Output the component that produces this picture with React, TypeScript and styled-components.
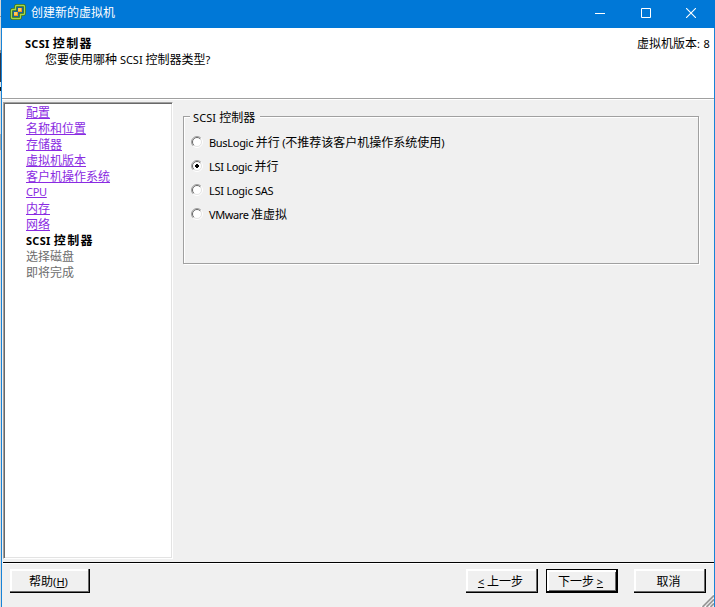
import React from "react";
import styled, { createGlobalStyle, css } from "styled-components";

const GlobalStyle = createGlobalStyle`
  * { box-sizing: border-box; }
  html, body { margin: 0; padding: 0; overflow: hidden; }
  body {
    font-family: "Noto Sans CJK SC", sans-serif;
    font-size: 12px;
    line-height: 16px;
    color: #000;
  }
`;

const Screen = styled.div`
  width: 715px;
  height: 607px;
  display: flex;
  overflow: hidden;
`;

const Backdrop = styled.div`
  width: 1px;
  flex: none;
  background: linear-gradient(
    #d6d6d6 0 16px, #8f9296 16px 17px, #d9d9d9 17px 50px, #8b8b8b 50px 53px,
    #303848 53px 82px, #e4e4e4 82px 87px, #111 87px 91px, #dcdcdc 91px 134px,
    #aaa 134px 150px, #dcdcdc 150px
  );
`;

const Window = styled.div`
  flex: 1;
  min-width: 0;
  display: flex;
  flex-direction: column;
  background: #f0f0f0;
  border: solid #1883d7;
  border-width: 0 1px;
`;

const TitleBar = styled.header`
  height: 28px;
  flex: none;
  display: flex;
  align-items: flex-start;
  margin: 0 -1px;
  padding: 0 1px 0 9px;
  background: #0078d7;
  color: #fff;
`;

const AppIcon = styled.svg`
  width: 16px;
  height: 16px;
  margin-top: 4px;
`;

const Title = styled.span`
  flex: 1;
  margin: 4px 0 0 5px;
`;

const WindowButton = styled.button`
  width: 45.5px;
  height: 25px;
  padding: 0;
  border: 0;
  background: none;
  display: grid;
  place-items: center;
`;

const Heading = styled.section`
  height: 71px;
  flex: none;
  display: flex;
  justify-content: space-between;
  padding: 7px 4px 0 23px;
  background: #fff;
  border-bottom: 1px solid #a0a0a0;
`;

const HeadingTitle = styled.div`
  height: 16px;
  line-height: 15px;
`;

const BoldText = styled.span`
  font-weight: 700;
  letter-spacing: 1.3px;
`;

const Question = styled.div`
  height: 16px;
  line-height: 15px;
  padding-left: 20px;
`;

const Version = styled.span`
  line-height: 15px;
`;

const Latin = styled.span<{ $spacing?: number; $underline?: boolean }>`
  font-family: "Noto Sans", sans-serif;
  font-size: 11px;
  letter-spacing: ${(p) => p.$spacing ?? 0}px;
  ${(p) => p.$underline && css`text-decoration: underline;`}
`;

const Body = styled.main`
  height: 463px;
  flex: none;
  display: flex;
  border-top: 1px solid #fff;
  border-bottom: 1px solid #f0f0f0;
`;

const Steps = styled.nav`
  width: 170px;
  height: 457px;
  flex: none;
  display: flex;
  flex-direction: column;
  margin: 2px 0 0 1px;
  padding: 0 0 0 22px;
  background: #fff;
  border: 1px solid;
  border-color: #a0a0a0 #fff #fff #a0a0a0;
  box-shadow: inset 1px 1px #696969, inset -1px -1px #e3e3e3;
`;

const Step = styled.span<{ $state: "done" | "current" | "pending"; $raised?: boolean }>`
  height: 16px;
  line-height: ${(p) => (p.$raised ? 15 : 17)}px;
  ${(p) => p.$state === "done" && css`
    color: #8a2be2;
    text-decoration: underline;
    text-decoration-thickness: 1px;
    text-underline-offset: 1px;
  `}
  ${(p) => p.$state === "pending" && css`color: #6d6d6d;`}
`;

const Group = styled.fieldset`
  width: 516px;
  height: 156px;
  margin: 8px 0 0 10px;
  padding: 6px 7px 0;
  min-width: 0;
  border: 1px solid #a0a0a0;
  box-shadow: 1px 1px #fff, inset 1px 1px #fff;
`;

const Legend = styled.legend`
  height: 16px;
  line-height: 18px;
  margin-left: -1px;
  padding: 0 5px 0 3px;
  background: #f0f0f0;
`;

const Option = styled.label`
  height: 24px;
  display: flex;
  align-items: center;
  gap: 6px;
`;

const RadioMark = styled.svg`
  width: 12px;
  height: 12px;
  flex: none;
  margin-top: -1px;
`;

const Footer = styled.footer`
  flex: 1;
  display: flex;
  align-items: flex-start;
  margin-left: 1px;
  padding: 5px 8px 0 7px;
  border-top: 1px solid #000;
  box-shadow: inset 0 1px #fff;
  position: relative;
`;

const PushButton = styled.button<{ $width: number; $gap?: number; $default?: boolean; $push?: boolean }>`
  width: ${(p) => p.$width}px;
  height: 24px;
  margin-top: 1px;
  margin-left: ${(p) => (p.$push ? "auto" : `${p.$gap ?? 0}px`)};
  padding: 0 3px 0 0;
  border: 0;
  background: #f0f0f0;
  color: #000;
  font: inherit;
  line-height: 16px;
  white-space: pre;
  box-shadow: ${(p) =>
    p.$default
      ? "inset 0 0 0 1px #000, inset -2px -2px #000, inset 3px 3px #fff, inset -3px -3px #696969"
      : "inset -1px -1px #000, inset -2px -2px #696969, inset 2px 2px #fff"};
`;

const Grip = styled.svg`
  position: absolute;
  right: 0;
  bottom: 0;
  width: 13px;
  height: 13px;
`;

type StepItem = { text: string; state: "done" | "current" | "pending"; latin?: string };

const steps: StepItem[] = [
  { text: "配置", state: "done" },
  { text: "名称和位置", state: "done" },
  { text: "存储器", state: "done" },
  { text: "虚拟机版本", state: "done" },
  { text: "客户机操作系统", state: "done" },
  { text: "", latin: "CPU", state: "done" },
  { text: "内存", state: "done" },
  { text: "网络", state: "done" },
  { text: "控制器", latin: "SCSI ", state: "current" },
  { text: "选择磁盘", state: "pending" },
  { text: "即将完成", state: "pending" },
];

const Radio = ({ checked }: { checked?: boolean }) => (
  <RadioMark viewBox="0 0 12 12">
    <circle cx="6" cy="6" r="5" fill="#fff" />
    <path d="M9.9 2.1A5.5 5.5 0 0 1 2.1 9.9" fill="none" stroke="#fff" />
    <path d="M9.2 2.8A4.5 4.5 0 0 1 2.8 9.2" fill="none" stroke="#e3e3e3" />
    <path d="M2.1 9.9A5.5 5.5 0 0 1 9.9 2.1" fill="none" stroke="#a0a0a0" />
    <path d="M2.8 9.2A4.5 4.5 0 0 1 9.2 2.8" fill="none" stroke="#696969" />
    {checked && <path d="M5 4h2v1h1v2H7v1H5V7H4V5h1z" fill="#000" />}
  </RadioMark>
);

export default function App() {
  return (
    <>
      <GlobalStyle />
      <Screen>
        <Backdrop />
        <Window>
          <TitleBar>
            <AppIcon viewBox="0 0 16 16">
              <path d="M6.5 1.5h7q1 0 1 1v7q0 1-1 1h-3v3q0 1-1 1h-7q-1 0-1-1v-7q0-1 1-1h3v-3q0-1 1-1Z" fill="#1763a0" stroke="#386f20" strokeWidth="2.8" />
              <path d="M6.5 1.5h7q1 0 1 1v7q0 1-1 1h-3v3q0 1-1 1h-7q-1 0-1-1v-7q0-1 1-1h3v-3q0-1 1-1Z" fill="none" stroke="#a5d84a" strokeWidth="1.3" />
              <path d="M8 4h4v4H8zM4 8h4v4H4z" fill="#f79a1c" />
              <path d="M8 4h3v3H8zM4 8h3v3H4z" fill="#ffc85a" />
            </AppIcon>
            <Title>创建新的虚拟机</Title>
            <WindowButton aria-label="最小化">
              <svg width="10" height="10"><path d="M0 5.5h10" stroke="#fff" /></svg>
            </WindowButton>
            <WindowButton aria-label="最大化">
              <svg width="10" height="10"><path d="M.5.5h9v9h-9z" fill="none" stroke="#fff" /></svg>
            </WindowButton>
            <WindowButton aria-label="关闭">
              <svg width="10" height="10"><path d="m0 0 10 10M10 0 0 10" stroke="#fff" strokeWidth="1.1" /></svg>
            </WindowButton>
          </TitleBar>
          <Heading>
            <div>
              <HeadingTitle><BoldText><Latin $spacing={0.3}>SCSI </Latin>控制器</BoldText></HeadingTitle>
              <Question>您要使用哪种<Latin> SCSI </Latin>控制器类型<Latin>?</Latin></Question>
            </div>
            <Version>虚拟机版本<Latin $spacing={0.3}>: 8</Latin></Version>
          </Heading>
          <Body>
            <Steps>
              {steps.map((s) => (
                <Step key={s.text + s.latin} $state={s.state} $raised={!s.text}>
                  {s.state === "current" ? (
                    <BoldText><Latin $spacing={0.3}>{s.latin}</Latin>{s.text}</BoldText>
                  ) : (
                    <>{s.latin && <Latin $spacing={-0.3}>{s.latin}</Latin>}{s.text}</>
                  )}
                </Step>
              ))}
            </Steps>
            <Group>
              <Legend><Latin $spacing={0.1}>SCSI </Latin>控制器</Legend>
              <Option><Radio /><span><Latin $spacing={-0.3}>BusLogic </Latin>并行<Latin $spacing={-0.3}> (</Latin>不推荐该客户机操作系统使用<Latin>)</Latin></span></Option>
              <Option><Radio checked /><span><Latin $spacing={-0.3}>LSI Logic </Latin>并行</span></Option>
              <Option><Radio /><span><Latin $spacing={-0.25}>LSI Logic SAS</Latin></span></Option>
              <Option><Radio /><span><Latin $spacing={-0.4}>VMware </Latin>准虚拟</span></Option>
            </Group>
          </Body>
          <Footer>
            <PushButton $width={80}>帮助<Latin>(</Latin><Latin $underline>H</Latin><Latin>)</Latin></PushButton>
            <PushButton $width={72} $push><Latin $underline>&lt;</Latin><Latin> </Latin>上一步</PushButton>
            <PushButton $width={72} $gap={8} $default>下一步<Latin> </Latin><Latin $underline>&gt;</Latin></PushButton>
            <PushButton $width={72} $gap={16}>取消</PushButton>
            <Grip viewBox="0 0 13 13">
              <path d="M0 13 13 0M4 13l9-9M8 13l5-5" stroke="#fff" strokeWidth="1.2" />
              <path d="m1.5 13 11.5-11.5M5.5 13 13 5.5M9.5 13 13 9.5" stroke="#9a9a9a" strokeWidth="1.8" />
            </Grip>
          </Footer>
        </Window>
      </Screen>
    </>
  );
}
